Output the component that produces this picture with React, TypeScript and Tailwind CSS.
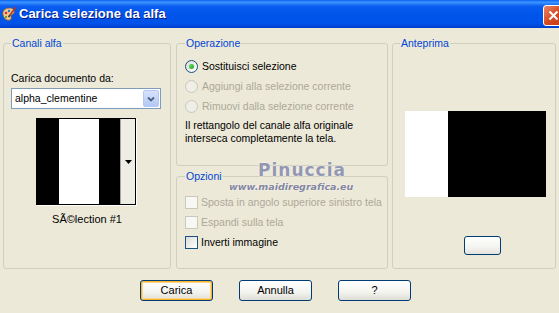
import clsx from "clsx";

const legendCls = "px-[1px] leading-[13px] text-[#0046D5]";
const groupCls = "min-w-0 rounded-[3px] border border-[#D0D0BF]";

function Radio({ checked, disabled, label }: { checked?: boolean; disabled?: boolean; label: string }) {
  return (
    <div className="flex h-[20px] items-center">
      <span
        className={clsx(
          "flex h-[13px] w-[13px] items-center justify-center rounded-full border",
          disabled
            ? "border-[#CAC8BB] bg-[#EFEEE7]"
            : "border-[#1C5180] bg-[linear-gradient(135deg,#DCDCD7,#FFFFFF)]"
        )}
      >
        {checked && <span className="h-[5px] w-[5px] rounded-full bg-[radial-gradient(circle_at_35%_35%,#55D855,#21A121)]" />}
      </span>
      <span className={clsx("ml-[4px] whitespace-nowrap leading-[13px]", disabled ? "text-[#ACA899]" : "text-black")}>{label}</span>
    </div>
  );
}

function Check({ disabled, label }: { disabled?: boolean; label: string }) {
  return (
    <div className="flex h-[20px] items-center">
      <span
        className={clsx(
          "h-[13px] w-[13px] shrink-0 border",
          disabled
            ? "border-[#CAC8BB] bg-[#F7F7F4]"
            : "border-[#1C5180] bg-[linear-gradient(135deg,#DCDCD7,#FFFFFF)]"
        )}
      />
      <span className={clsx("ml-[3px] whitespace-nowrap leading-[13px]", disabled ? "text-[#ACA899]" : "text-black")}>{label}</span>
    </div>
  );
}

function XpButton({ label, focused }: { label: string; focused?: boolean }) {
  return (
    <button
      className={clsx(
        "flex h-[21px] w-[73px] items-center justify-center rounded-[3px] border border-[#003C74] bg-[linear-gradient(to_bottom,#FFFFFF,#F3F3EF_60%,#DEDDD5)] text-[11px] text-black",
        focused && "shadow-[inset_0_0_0_1px_#F8B330,inset_0_0_0_2px_#FCD58A]"
      )}
    >
      {label}
    </button>
  );
}

function TitleBar() {
  return (
    <div className="flex h-[28px] items-center bg-[linear-gradient(to_bottom,#0A61F2_0%,#3D95FF_8%,#0A5DF0_22%,#0055EB_50%,#0052E8_85%,#0046D6_94%,#003DC8_100%)]">
      <svg width="16" height="16" viewBox="0 0 16 16" className="ml-[1px]">
        <path d="M2 9c-1-4 2-7 6-7s6 2 5 5c-1 2-3 1-3 3s1 3-1 4c-3 1-6-1-7-5z" fill="#F2C58C" stroke="#8A5A2A" strokeWidth="0.8" />
        <circle cx="5" cy="7" r="1.2" fill="#D22" />
        <circle cx="8" cy="5" r="1.2" fill="#27C" />
        <circle cx="5" cy="11" r="1.1" fill="#2A2" />
        <path d="M15 1 9 9" stroke="#B32" strokeWidth="1.6" />
        <path d="M9 9 7.5 11" stroke="#333" strokeWidth="1.6" />
      </svg>
      <span className="ml-[2px] font-['Liberation_Sans',Arial,sans-serif] text-[13px] font-bold text-white [text-shadow:1px_1px_0_#0A1883]">
        Carica selezione da alfa
      </span>
      <div className="ml-auto mr-[-5px] mt-[3px] flex h-[21px] w-[21px] items-center justify-center rounded-[3px] border border-white bg-[linear-gradient(135deg,#E8866A,#D4471F_55%,#C13A16)]">
        <svg width="11" height="11" viewBox="0 0 11 11">
          <path d="M1.5 1.5 9.5 9.5M9.5 1.5 1.5 9.5" stroke="white" strokeWidth="2" />
        </svg>
      </div>
    </div>
  );
}

export default function App() {
  return (
    <div className="relative h-[313px] w-[559px] overflow-hidden bg-[#ECE9D8] font-['Liberation_Sans',Arial,sans-serif] text-[10.5px] text-black">
      <TitleBar />

      <div className="flex pl-[3px] pt-[9px]">
        {/* Canali alfa */}
        <fieldset className={clsx(groupCls, "h-[232px] w-[168px] px-[7px]")}>
          <legend className={legendCls}>Canali alfa</legend>
          <div className="mt-[22px] leading-[13px]">Carica documento da:</div>
          <div className="mt-[3px] flex h-[21px] w-[150px] items-center border border-[#7F9DB9] bg-white pl-[3px]">
            <span className="flex-1">alpha_clementine</span>
            <span className="mr-[1px] flex h-[17px] w-[16px] items-center justify-center rounded-[2px] border border-[#B5C8F3] bg-[linear-gradient(to_bottom,#D7E3FD,#B4C8F5)]">
              <svg width="8" height="6" viewBox="0 0 8 6">
                <path d="M1 1.5 4 4.5 7 1.5" fill="none" stroke="#4D6185" strokeWidth="1.8" />
              </svg>
            </span>
          </div>
          <div className="ml-[25px] mt-[9px] flex h-[87px] w-[100px] border border-black shadow-[1px_1px_0_#FFFFFF]">
            <div className="flex w-[83px]">
              <div className="w-[22px] bg-black" />
              <div className="w-[40px] bg-white" />
              <div className="w-[21px] bg-black" />
            </div>
            <div className="flex flex-1 items-center justify-center border-l border-[#ACA899] bg-[#EEEDE5]">
              <svg width="7" height="4" viewBox="0 0 7 4">
                <path d="M0 0h7L3.5 4z" fill="#000" />
              </svg>
            </div>
          </div>
          <div className="mt-[8px] text-center text-[11px] leading-[13px]">SÃ©lection #1</div>
        </fieldset>

        {/* Middle column */}
        <div className="ml-[5px] flex w-[212px] flex-col">
          <fieldset className={clsx(groupCls, "h-[129px] px-[8px]")}>
            <legend className={legendCls}>Operazione</legend>
            <div className="mt-[6px]">
              <Radio checked label="Sostituisci selezione" />
              <Radio disabled label="Aggiungi alla selezione corrente" />
              <Radio disabled label="Rimuovi dalla selezione corrente" />
            </div>
            <p className="mt-[3px] leading-[13px]">
              Il rettangolo del canale alfa originale
              <br />
              interseca completamente la tela.
            </p>
          </fieldset>

          <fieldset className={clsx(groupCls, "mt-[4px] h-[99px] px-[8px]")}>
            <legend className={legendCls}>Opzioni</legend>
            <div className="mt-[9px]">
              <Check disabled label="Sposta in angolo superiore sinistro tela" />
              <Check disabled label="Espandi sulla tela" />
              <Check label="Inverti immagine" />
            </div>
          </fieldset>
        </div>

        {/* Anteprima */}
        <fieldset className={clsx(groupCls, "ml-[4px] h-[232px] w-[164px] px-[7px]")}>
          <legend className={legendCls}>Anteprima</legend>
          <div className="ml-[5px] mt-[61px] flex h-[86px] w-[141px]">
            <div className="w-[43px] bg-white" />
            <div className="flex-1 bg-black" />
          </div>
          <button className="ml-[64px] mt-[39px] block h-[19px] w-[37px] rounded-[3px] border border-[#003C74] bg-[linear-gradient(to_bottom,#FFFFFF,#F4F4F1_60%,#E4E3DC)]" />
        </fieldset>
      </div>

      <div className="mt-[11px] flex gap-[26px] pl-[140px]">
        <XpButton label="Carica" focused />
        <XpButton label="Annulla" />
        <XpButton label="?" />
      </div>

      {/* watermark */}
      <div className="pointer-events-none absolute left-[258px] top-[158px] font-['DejaVu_Sans',sans-serif] text-[17px] font-bold tracking-[1px] text-[#9397B2] [text-shadow:0_0_2px_#FFFFFF]">
        Pinuccia
      </div>
      <div className="pointer-events-none absolute left-[229px] top-[180px] font-['DejaVu_Sans',sans-serif] text-[9.5px] font-bold italic text-[#8386A0] [text-shadow:0_0_2px_#FFFFFF]">
        www.maidiregrafica.eu
      </div>
    </div>
  );
}
